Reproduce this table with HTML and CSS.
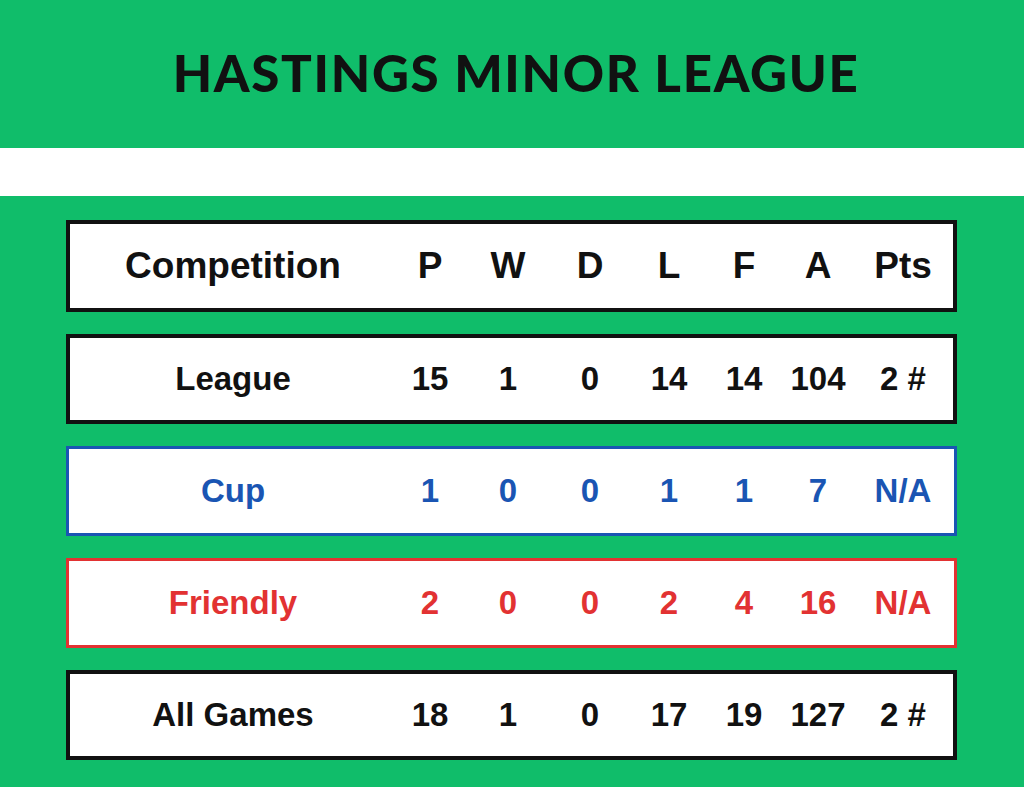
FILE: index.html
```html
<!DOCTYPE html>
<html>
<head>
<meta charset="utf-8">
<link rel="stylesheet" href="styles.css">
</head>
<body>
<header class="banner"><h1 class="title">HASTINGS MINOR LEAGUE</h1></header>
<div class="stripe"></div>
<main class="board">
  <div class="row head">
    <span class="label">Competition</span><span>P</span><span>W</span><span>D</span><span>L</span><span>F</span><span>A</span><span>Pts</span>
  </div>
  <div class="row">
    <span class="label">League</span><span>15</span><span>1</span><span>0</span><span>14</span><span>14</span><span>104</span><span>2 #</span>
  </div>
  <div class="row cup">
    <span class="label">Cup</span><span>1</span><span>0</span><span>0</span><span>1</span><span>1</span><span>7</span><span>N/A</span>
  </div>
  <div class="row friendly">
    <span class="label">Friendly</span><span>2</span><span>0</span><span>0</span><span>2</span><span>4</span><span>16</span><span>N/A</span>
  </div>
  <div class="row">
    <span class="label">All Games</span><span>18</span><span>1</span><span>0</span><span>17</span><span>19</span><span>127</span><span>2 #</span>
  </div>
</main>
</body>
</html>
```
FILE: styles.css
```css
html, body {
  margin: 0;
  padding: 0;
}
body {
  width: 1024px;
  height: 787px;
  overflow: hidden;
  background: #10bd6a;
  font-family: "Liberation Sans", Arial, sans-serif;
}
.banner {
  height: 148px;
  box-sizing: border-box;
  padding-bottom: 4px;
  display: flex;
  align-items: center;
  justify-content: center;
  background: #10bd6a;
}
.title {
  margin: 0;
  padding-left: 8px;
  font-family: Lato, "DejaVu Sans", sans-serif;
  font-weight: 900;
  font-size: 51px;
  letter-spacing: 1.7px;
  color: #111;
}
.stripe {
  height: 48px;
  background: #fff;
}
.board {
  padding: 24px 0 0 66px;
  display: flex;
  flex-direction: column;
  gap: 22px;
}
.row {
  box-sizing: border-box;
  width: 891px;
  height: 90px;
  background: #fff;
  border: 4px solid #111;
  display: grid;
  grid-template-columns: 326px 68px 88px 76px 82px 68px 80px 90px;
  align-items: center;
  justify-items: center;
  font-weight: 700;
  font-size: 33px;
  color: #111;
}
.row.head {
  font-size: 37px;
  height: 92px;
}
.row.cup {
  border: 3px solid #1a55b3;
  color: #1a55b3;
  padding-left: 1px;
}
.row.friendly {
  border: 3px solid #e23232;
  color: #e23232;
  padding-left: 1px;
}
```
